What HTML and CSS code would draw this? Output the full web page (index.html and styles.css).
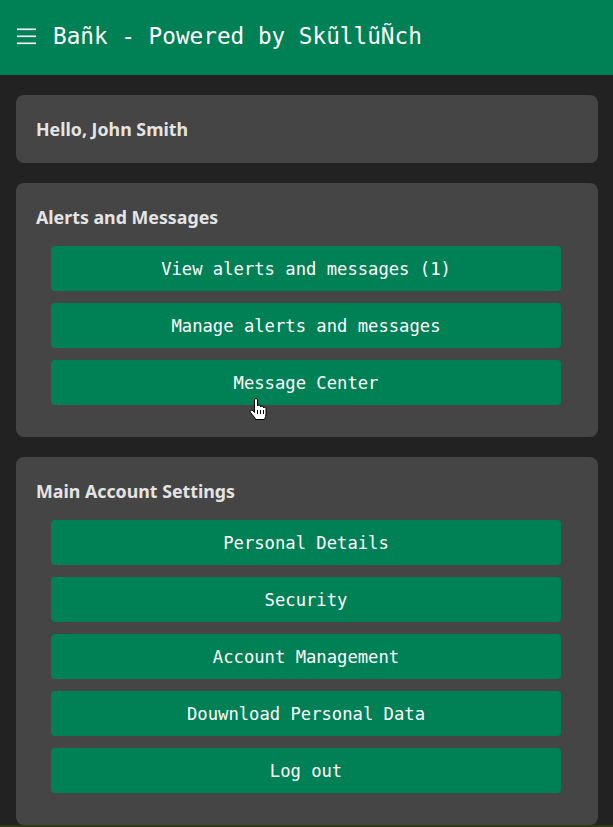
FILE: index.html
```html
<!DOCTYPE html>
<html lang="en">
<head>
<meta charset="utf-8">
<title>Bañk - Powered by SkũllũÑch</title>
<link rel="stylesheet" href="styles.css">
</head>
<body>
<header class="topbar">
  <svg class="menu-icon" width="19" height="18" viewBox="0 0 19 18" aria-hidden="true">
    <rect x="0" y="1.5" width="19" height="1.6" fill="#fff"/>
    <rect x="0" y="8.5" width="19" height="1.6" fill="#fff"/>
    <rect x="0" y="15.5" width="19" height="1.6" fill="#fff"/>
  </svg>
  <span class="brand">Bañk - Powered by SkũllũÑch</span>
</header>
<main class="content">
  <section class="card">
    <h2 class="card-title">Hello, John Smith</h2>
  </section>
  <section class="card">
    <h2 class="card-title">Alerts and Messages</h2>
    <div class="btn-list">
      <a class="btn" href="#">View alerts and messages (1)</a>
      <a class="btn" href="#">Manage alerts and messages</a>
      <a class="btn" href="#">Message Center
        <svg class="cursor" width="18" height="23" viewBox="-0.5 -0.5 18 23" aria-hidden="true">
          <path d="M5 1.5 Q5 0 6.5 0 Q8 0 8 1.5 L8 7.5 Q8 6.5 9.5 6.5 Q11 6.5 11 7.5 L11 8.5 Q11 7.5 12.5 7.5 Q14 7.5 14 8.5 L14 9.5 Q14 8.8 15 8.8 Q16.5 8.8 16.5 10 L16.5 15 Q16.5 18 15 21 L6 21 L5.5 19.5 L1 14 Q0 12.5 1.2 11.8 Q2.5 11.2 3.5 12.3 L5 14 Z" fill="#fff" stroke="#000" stroke-width="1" stroke-linejoin="round"/>
          <path d="M8 11.5 L8 15.5 M11 11.5 L11 15.5 M14 11.5 L14 15.5" stroke="#000" stroke-width="1"/>
        </svg>
      </a>
    </div>
  </section>
  <section class="card">
    <h2 class="card-title">Main Account Settings</h2>
    <div class="btn-list">
      <a class="btn" href="#">Personal Details</a>
      <a class="btn" href="#">Security</a>
      <a class="btn" href="#">Account Management</a>
      <a class="btn" href="#">Douwnload Personal Data</a>
      <a class="btn" href="#">Log out</a>
    </div>
  </section>
</main>
<div class="bottom-strip"></div>
</body>
</html>
```

FILE: styles.css
```css
html, body {
  margin: 0;
  padding: 0;
}
body {
  background: #222222;
  font-family: "Noto Sans", "DejaVu Sans", sans-serif;
  color: #e6e6e6;
}
.topbar {
  height: 75px;
  background: #008055;
  display: flex;
  align-items: center;
  padding: 0 0 3px 17px;
  box-sizing: border-box;
  gap: 17px;
}
.menu-icon {
  display: block;
  flex: none;
}
.brand {
  font-family: "DejaVu Sans Mono", "Liberation Mono", monospace;
  font-size: 22.7px;
  color: #ffffff;
  white-space: nowrap;
}
.content {
  display: flex;
  flex-direction: column;
  gap: 20px;
  padding: 20px 15px 0 16px;
}
.card {
  background: #454545;
  border-radius: 8px;
  padding: 20px 20px 9px 20px;
}
.card-title {
  margin: 0 0 11px 0;
  padding-top: 1px;
  font-size: 17.8px;
  font-weight: 700;
  line-height: 27px;
  color: #e4e4e4;
}
.btn-list {
  display: flex;
  flex-direction: column;
  gap: 12px;
  padding: 4px 17px 23px 15px;
}
.btn {
  position: relative;
  display: flex;
  align-items: center;
  justify-content: center;
  height: 45px;
  background: #008055;
  border-radius: 4px;
  color: #ffffff;
  text-decoration: none;
  font-family: "DejaVu Sans Mono", "Liberation Mono", monospace;
  font-size: 17.2px;
  box-sizing: border-box;
}
.cursor {
  position: absolute;
  left: 198px;
  top: 38px;
}
.bottom-strip {
  height: 4px;
  background: #2e3a14;
}
```
